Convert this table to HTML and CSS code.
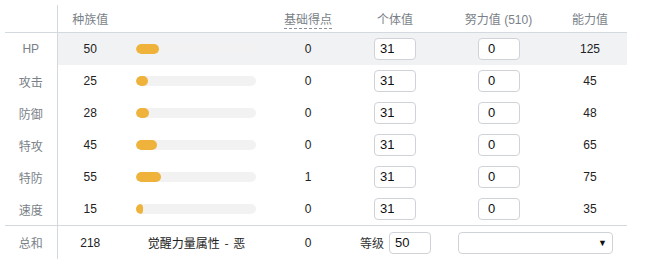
FILE: index.html
```html
<!DOCTYPE html>
<html lang="zh">
<head>
<meta charset="utf-8">
<link rel="stylesheet" href="styles.css">
</head>
<body>
<table class="stats">
  <colgroup>
    <col class="c-label"><col class="c-base"><col class="c-bar"><col class="c-pts"><col class="c-iv"><col class="c-ev"><col class="c-val">
  </colgroup>
  <thead>
    <tr>
      <th class="lbl"></th>
      <th>种族值</th>
      <th></th>
      <th><span class="dashed">基础得点</span></th>
      <th>个体值</th>
      <th>努力值 (510)</th>
      <th>能力值</th>
    </tr>
  </thead>
  <tbody>
    <tr class="hl">
      <td class="lbl">HP</td><td>50</td>
      <td><div class="track"><div class="fill" style="width:23px"></div></div></td>
      <td>0</td><td><div class="inp iv">31</div></td><td><div class="inp ev">0</div></td><td>125</td>
    </tr>
    <tr>
      <td class="lbl">攻击</td><td>25</td>
      <td><div class="track"><div class="fill" style="width:12px"></div></div></td>
      <td>0</td><td><div class="inp iv">31</div></td><td><div class="inp ev">0</div></td><td>45</td>
    </tr>
    <tr>
      <td class="lbl">防御</td><td>28</td>
      <td><div class="track"><div class="fill" style="width:13px"></div></div></td>
      <td>0</td><td><div class="inp iv">31</div></td><td><div class="inp ev">0</div></td><td>48</td>
    </tr>
    <tr>
      <td class="lbl">特攻</td><td>45</td>
      <td><div class="track"><div class="fill" style="width:21px"></div></div></td>
      <td>0</td><td><div class="inp iv">31</div></td><td><div class="inp ev">0</div></td><td>65</td>
    </tr>
    <tr>
      <td class="lbl">特防</td><td>55</td>
      <td><div class="track"><div class="fill" style="width:25px"></div></div></td>
      <td>1</td><td><div class="inp iv">31</div></td><td><div class="inp ev">0</div></td><td>75</td>
    </tr>
    <tr>
      <td class="lbl">速度</td><td>15</td>
      <td><div class="track"><div class="fill" style="width:7px"></div></div></td>
      <td>0</td><td><div class="inp iv">31</div></td><td><div class="inp ev">0</div></td><td>35</td>
    </tr>
  </tbody>
  <tfoot>
    <tr>
      <td class="lbl">总和</td><td>218</td>
      <td class="hp-type">觉醒力量属性 - 恶</td>
      <td>0</td>
      <td><div class="level"><span class="lv-label">等级</span><div class="inp lv">50</div></div></td>
      <td colspan="2"><div class="select"><span></span><span class="arrow">▼</span></div></td>
    </tr>
  </tfoot>
</table>
</body>
</html>
```

FILE: styles.css
```css
html, body {
  margin: 0;
  padding: 0;
  background: #fff;
}
body {
  padding: 5px 0 0 5px;
  font-family: "Liberation Sans", "Noto Sans CJK SC", sans-serif;
  font-size: 12px;
  color: #222;
}
.stats {
  border-collapse: collapse;
  table-layout: fixed;
  width: 622px;
}
.c-label { width: 52px; }
.c-base { width: 66px; }
.c-bar { width: 147px; }
.c-pts { width: 76px; }
.c-iv { width: 98px; }
.c-ev { width: 109px; }
.c-val { width: 74px; }

.stats th, .stats td {
  padding: 0;
  text-align: center;
  vertical-align: middle;
}
.stats th {
  height: 26px;
  font-weight: normal;
  color: #7a7f88;
  font-family: "Noto Sans CJK SC", "Liberation Sans", sans-serif;
  font-size: 12px;
  border-bottom: 1px solid #d4d8df;
  padding-bottom: 1px;
}
.stats thead th:nth-child(6) {
  font-family: "Liberation Sans", "Noto Sans CJK SC", sans-serif;
}
.stats .lbl {
  border-right: 1px solid #d4d8df;
  color: #7a7f88;
  font-family: "Liberation Sans", "Noto Sans CJK SC", sans-serif;
}
.stats tbody td {
  height: 32px;
}
.stats tbody tr.hl td:not(.lbl) {
  background: #f1f2f4;
}
.stats tfoot td {
  height: 33px;
  border-top: 1px solid #d4d8df;
}
.dashed {
  border-bottom: 1px dashed #8a8f98;
  padding-bottom: 1px;
}
.track {
  width: 120px;
  height: 10px;
  margin-left: 13px;
  border-radius: 5px;
  background: #f2f2f2;
  overflow: hidden;
}
.fill {
  height: 10px;
  border-radius: 5px;
  background: #efb23a;
}
.inp {
  box-sizing: border-box;
  width: 42px;
  height: 22px;
  border: 1px solid #cfd3d8;
  border-radius: 4px;
  background: #fff;
  text-align: left;
  line-height: 20px;
  font-size: 13px;
  color: #111;
}
.inp.iv { margin-left: 28px; padding-left: 5px; }
.inp.ev { margin-left: 34px; padding-left: 9px; }
.hp-type {
  color: #222;
  font-family: "Noto Sans CJK SC", "Liberation Sans", sans-serif;
  word-spacing: 2px;
}
.level {
  display: flex;
  align-items: center;
  justify-content: flex-start;
  gap: 5px;
  padding-left: 14px;
}
.lv-label {
  color: #333;
  font-family: "Noto Sans CJK SC", sans-serif;
}
.inp.lv { padding-left: 5px; }
.select {
  box-sizing: border-box;
  width: 155px;
  height: 22px;
  margin-left: 14px;
  border: 1px solid #cfd3d8;
  border-radius: 4px;
  display: flex;
  align-items: center;
  justify-content: space-between;
  padding: 0 5px 0 8px;
}
.arrow {
  font-size: 9px;
  color: #111;
}
```
